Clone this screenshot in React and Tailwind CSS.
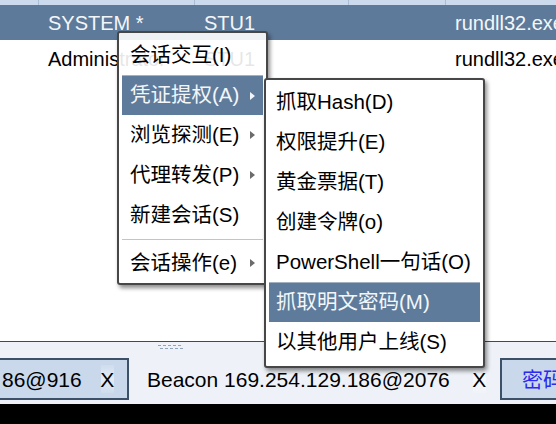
import React from "react";

const sessions = [
  { user: "SYSTEM *", computer: "STU1", process: "rundll32.exe", selected: true },
  { user: "Administrator", computer: "STU1", process: "rundll32.exe" },
];

const sessionMenu = [
  { label: "会话交互(I)" },
  { label: "凭证提权(A)", sub: true, active: true },
  { label: "浏览探测(E)", sub: true },
  { label: "代理转发(P)", sub: true },
  { label: "新建会话(S)" },
  { divider: true },
  { label: "会话操作(e)", sub: true },
];

const credMenu = [
  "抓取Hash(D)",
  "权限提升(E)",
  "黄金票据(T)",
  "创建令牌(o)",
  "PowerShell一句话(O)",
  "抓取明文密码(M)",
  "以其他用户上线(S)",
];

const Arrow = ({ light }) => (
  <svg width="5" height="8" viewBox="0 0 5 8" className="shrink-0">
    <polygon points="0,0 5,4 0,8" fill={light ? "#f2f5f8" : "#6b6b6b"} />
  </svg>
);

const Row = ({ s }) => (
  <div
    className={`grid grid-cols-[39px_156px_154px_97px_1fr] items-center text-[20px] leading-none ${
      s.selected ? "h-[35px] bg-[#5e7a9a] text-[#f3f6f9]" : "h-[37px] text-black"
    }`}
  >
    <div />
    <div className="pl-[9px] whitespace-nowrap overflow-hidden">{s.user}</div>
    <div className="pl-[9px] whitespace-nowrap">{s.computer}</div>
    <div />
    <div className="pl-[9px] whitespace-nowrap">{s.process}</div>
  </div>
);

const MenuItem = ({ label, sub, active, pad }) => (
  <div
    className={`h-[40px] flex items-center justify-between pr-[8px] whitespace-nowrap ${pad} ${
      active ? "bg-[#5f7b9b] text-[#f3f6f9] border-t border-[#a3b0bf]" : "text-black"
    }`}
  >
    <span>{label}</span>
    {sub && <Arrow light={active} />}
  </div>
);

const Tab = ({ children, boxed, className = "" }) => (
  <div
    className={`h-[42px] flex items-center whitespace-nowrap overflow-hidden ${
      boxed ? "bg-[#c9d9eb] border-2 border-[#3c5068]" : ""
    } ${className}`}
  >
    {children}
  </div>
);

const CloseX = ({ className = "" }) => (
  <span className={`flex items-center justify-center w-[13px] h-[28px] bg-gradient-to-b from-white/10 via-white/50 to-white/10 ${className}`}>
    X
  </span>
);

export default function App() {
  return (
    <div className="relative w-[556px] h-[424px] overflow-hidden bg-black font-[family-name:'Liberation_Sans','Noto_Sans_CJK_SC',sans-serif]">
      {/* session table */}
      <div className="h-[341px] bg-white">
        <div className="grid grid-cols-[39px_156px_154px_97px_1fr] h-[5px] bg-[#cbdbed]">
          <div className="border-r border-[#a9bdd5]" />
          <div className="border-r border-[#a9bdd5]" />
          <div className="border-r border-[#a9bdd5]" />
          <div className="border-r border-[#a9bdd5]" />
          <div />
        </div>
        {sessions.map((s) => (
          <Row key={s.user} s={s} />
        ))}
      </div>
      <div className="h-px bg-[#3d4a5c]" />

      {/* console tabs */}
      <div className="h-[62px] bg-[#eef2f8] flex flex-col">
        <div className="h-[16px] pl-[158px] pt-[3px]">
          <svg width="26" height="5" viewBox="0 0 26 5">
            {[0, 5, 10, 15, 20].map((x) => (
              <rect key={x} x={x} y="0" width="3" height="1" fill="#8fa3bb" />
            ))}
            {[2, 7, 12, 17, 22].map((x) => (
              <rect key={x} x={x} y="3" width="3" height="1" fill="#8fa3bb" />
            ))}
          </svg>
        </div>
        <div className="flex text-[21px] leading-none text-black">
          <Tab boxed className="w-[129px] border-l-0 pl-[2px]">
            <span>86@916</span>
            <CloseX className="ml-[19px]" />
          </Tab>
          <Tab className="w-[371px] pl-[18px]">
            <span>Beacon 169.254.129.186@2076</span>
            <CloseX className="ml-[23px]" />
          </Tab>
          <Tab boxed className="flex-1 pl-[20px] border-r-0 text-[#2a2af0]">
            <span>密码凭证</span>
          </Tab>
        </div>
      </div>

      {/* session context menu */}
      <div className="absolute left-[117px] top-[31px] w-[151px] border-2 border-[#474747] rounded-[3px] bg-white/90 shadow-[2px_3px_4px_rgba(0,0,0,0.45)] px-[3px] pt-[2px] text-[20.5px] leading-none">
        {sessionMenu.map((m, i) =>
          m.divider ? (
            <div key={i} className="h-[8px] flex items-center">
              <div className="h-px w-full bg-[#c4c4c4]" />
            </div>
          ) : (
            <MenuItem key={i} {...m} pad="pl-[8px]" />
          )
        )}
      </div>

      {/* credential submenu */}
      <div className="absolute left-[264px] top-[78px] w-[221px] border-2 border-[#474747] rounded-[3px] bg-white shadow-[2px_3px_4px_rgba(0,0,0,0.45)] px-[3px] pt-[2px] pb-[4px] text-[20.5px] leading-none">
        {credMenu.map((label, i) => (
          <MenuItem key={label} label={label} active={i === 5} pad="pl-[7px]" />
        ))}
      </div>
    </div>
  );
}
